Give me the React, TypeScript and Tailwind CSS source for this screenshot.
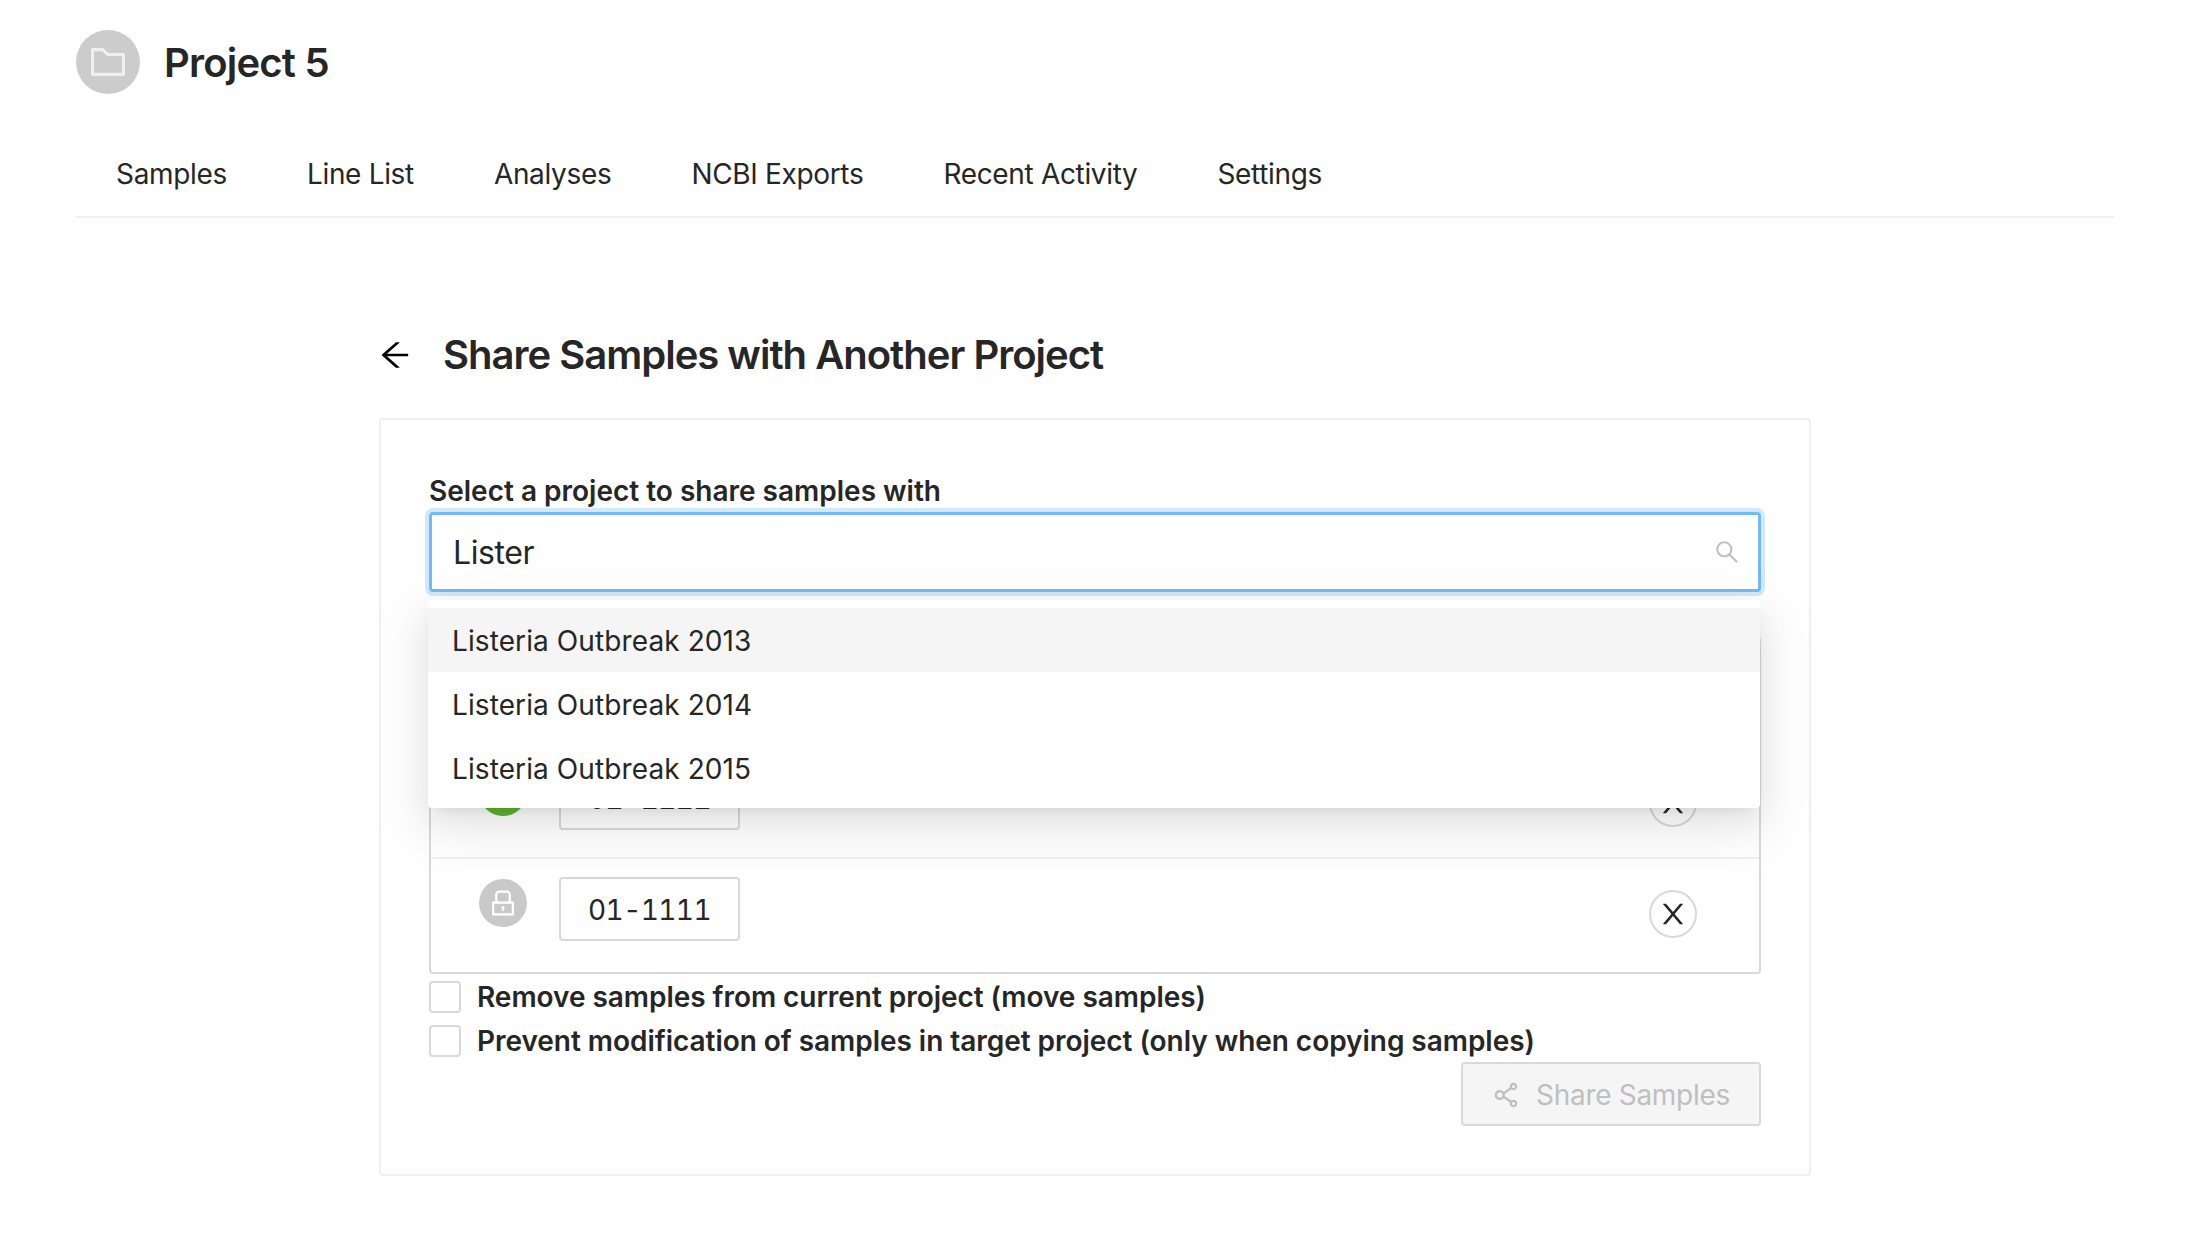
const FOLDER = "M880 298.4H521L403.7 186.2a8.15 8.15 0 00-5.5-2.2H144c-17.7 0-32 14.3-32 32v592c0 17.7 14.3 32 32 32h736c17.7 0 32-14.3 32-32V330.4c0-17.7-14.3-32-32-32zM840 768H184V256h188.5l119.6 114.4H840V768z";
const LOCK = "M832 464h-68V240c0-70.7-57.3-128-128-128H388c-70.7 0-128 57.3-128 128v224h-68c-17.7 0-32 14.3-32 32v384c0 17.7 14.3 32 32 32h640c17.7 0 32-14.3 32-32V496c0-17.7-14.3-32-32-32zM332 240c0-30.9 25.1-56 56-56h248c30.9 0 56 25.1 56 56v224H332V240zm460 600H232V536h560v304zM484 701v53c0 4.4 3.6 8 8 8h40c4.4 0 8-3.6 8-8v-53a48.01 48.01 0 10-56 0z";
const SHARE = "M752 664c-28.5 0-54.8 10-75.4 26.7L469.4 540.8a160.68 160.68 0 000-57.6l207.2-149.9C697.2 350 723.5 360 752 360c66.2 0 120-53.8 120-120s-53.8-120-120-120-120 53.8-120 120c0 11.6 1.6 22.7 4.7 33.3L439.9 415.8C410.7 377.1 364.3 352 312 352c-88.4 0-160 71.6-160 160s71.6 160 160 160c52.3 0 98.7-25.1 127.9-63.8l196.8 142.5c-3.1 10.6-4.7 21.8-4.7 33.3 0 66.2 53.8 120 120 120s120-53.8 120-120-53.8-120-120-120zm0-476c28.7 0 52 23.3 52 52s-23.3 52-52 52-52-23.3-52-52 23.3-52 52-52zM312 600c-48.5 0-88-39.5-88-88s39.5-88 88-88 88 39.5 88 88-39.5 88-88 88zm440 236c-28.7 0-52-23.3-52-52s23.3-52 52-52 52 23.3 52 52-23.3 52-52 52z";
const CLOSE = "M563.8 512l262.5-312.9c4.4-5.2.7-13.1-6.1-13.1h-79.8c-4.7 0-9.2 2.1-12.3 5.7L511.6 449.8 295.1 191.7c-3-3.6-7.5-5.7-12.3-5.7H203c-6.8 0-10.5 7.9-6.1 13.1L459.4 512 196.9 824.9A7.95 7.95 0 00203 838h79.8c4.7 0 9.2-2.1 12.3-5.7l216.5-258.1 216.5 258.1c3 3.6 7.5 5.7 12.3 5.7h79.8c6.8 0 10.5-7.9 6.1-13.1L563.8 512z";
const SEARCH = "M909.6 854.5L649.9 594.8C690.2 542.7 712 479 712 412c0-80.2-31.3-155.4-87.9-212.1-56.6-56.7-132-87.9-212.1-87.9s-155.5 31.3-212.1 87.9C143.2 256.5 112 331.8 112 412c0 80.1 31.3 155.5 87.9 212.1C256.5 680.8 331.8 712 412 712c67 0 130.6-21.8 182.7-62l259.7 259.6a8.2 8.2 0 0011.6 0l43.6-43.5a8.2 8.2 0 000-11.6zM570.4 570.4C528 612.7 471.8 636 412 636s-116-23.3-158.4-65.6C211.3 528 188 471.8 188 412s23.3-116.1 65.6-158.4C296 211.3 352.2 188 412 188s116.1 23.2 158.4 65.6S636 352.2 636 412s-23.3 116.1-65.6 158.4z";
const ARROW = "M872 474H286.9l350.2-304c5.6-4.9 2.2-14-5.2-14h-88.5c-3.9 0-7.6 1.4-10.5 3.9L155 487.8a31.96 31.96 0 000 48.3L535.1 866c1.5 1.3 3.3 2 5.2 2h91.5c7.4 0 10.8-9.2 5.2-14L286.9 550H872c4.4 0 8-3.6 8-8v-60c0-4.4-3.6-8-8-8z";

const Icon = ({ d, className }: { d: string; className: string }) => (
  <svg viewBox="64 64 896 896" fill="currentColor" className={className}>
    <path d={d} />
  </svg>
);

const tabs = ["Samples", "Line List", "Analyses", "NCBI Exports", "Recent Activity", "Settings"];
const projects = ["Listeria Outbreak 2013", "Listeria Outbreak 2014", "Listeria Outbreak 2015"];

const SampleRow = ({ name, locked, last }: { name: string; locked: boolean; last?: boolean }) => (
  <div className={`flex items-start pl-[48px] pr-[62px] pt-[18px] h-[111px] ${last ? "" : "border-b-2 border-[#f0f0f0]"}`}>
    <div className={`flex items-center justify-center w-[48px] h-[48px] rounded-full mt-[2px] text-white ${locked ? "bg-[#c9c9c9]" : "bg-[#5cb531]"}`}>
      <Icon d={LOCK} className="w-[28px] h-[28px]" />
    </div>
    <div className="flex items-center justify-center w-[181px] h-[64px] ml-[32px] pt-[2px] border-2 border-[#d9d9d9] rounded-[4px] text-[28px] tabular-nums tracking-[-0.6px]">
      {name}
    </div>
    <div className="flex items-center justify-center w-[48px] h-[48px] ml-auto mt-[13px] rounded-full border-2 border-[#d9d9d9]">
      <Icon d={CLOSE} className="w-[28px] h-[28px]" />
    </div>
  </div>
);

const CheckRow = ({ label }: { label: string }) => (
  <label className="flex items-center h-[44px] text-[28px] font-semibold tracking-[-0.04px]">
    <span className="w-[32px] h-[32px] mr-[16px] border-2 border-[#d9d9d9] rounded-[4px]" />
    {label}
  </label>
);

export default function App() {
  return (
    <div className="min-h-screen bg-white text-[#262626] font-['Inter',sans-serif] overflow-hidden">
      <header className="ml-[76px] mr-[78px] pt-[30px] border-b-2 border-[#f0f0f0]">
        <div className="flex items-center h-[64px]">
          <div className="flex items-center justify-center w-[64px] h-[64px] rounded-full bg-[#cccccc] text-[#f0f0f0]">
            <Icon d={FOLDER} className="w-[38px] h-[38px]" />
          </div>
          <h1 className="ml-[24px] mt-[2px] text-[40px] leading-none font-semibold tracking-[-0.8px]">Project 5</h1>
        </div>
        <nav className="flex mt-[36px] h-[86px] items-center">
          {tabs.map((tab) => (
            <div key={tab} className="px-[40px] pt-[1px] text-[28px] tracking-[-0.33px]">{tab}</div>
          ))}
        </nav>
      </header>

      <main className="ml-[379px] w-[1432px]">
        <div className="flex items-center mt-[107px] h-[60px]">
          <Icon d={ARROW} className="w-[32px] h-[32px] text-black" />
          <h2 className="ml-[32px] text-[40px] font-semibold tracking-[-1px]">Share Samples with Another Project</h2>
        </div>
        <section className="relative mt-[33px] h-[758px] border-2 border-[#f0f0f0] rounded-[4px] px-[48px] pt-[48px]">
          <div className="h-[44px] pt-[1px] text-[28px] leading-[44px] font-semibold">Select a project to share samples with</div>
          <div className="flex items-center w-[1332px] h-[80px] pl-[21px] pr-[19px] border-[3px] border-[#74b9f7] rounded-[4px] shadow-[0_0_0_4px_rgba(24,144,255,0.2)] text-[32px] tracking-[-0.4px]">
            <span className="pt-[2px]">Lister</span>
            <Icon d={SEARCH} className="w-[24px] h-[24px] ml-auto text-[#bfbfbf]" />
          </div>

          <div className="absolute left-[47px] top-[180px] z-10 w-[1332px] py-[8px] bg-white rounded-[4px] shadow-[0_6px_12px_-8px_rgba(0,0,0,0.12),0_12px_32px_0_rgba(0,0,0,0.08),0_18px_56px_16px_rgba(0,0,0,0.05)]">
            {projects.map((project, i) => (
              <div key={project} className={`flex items-center h-[64px] px-[24px] pt-[2px] text-[28px] tracking-[0.1px] ${i === 0 ? "bg-[#f5f5f5]" : ""}`}>
                {project}
              </div>
            ))}
          </div>

          <div className="mt-[45px] w-[1332px] h-[337px] border-2 border-[#d9d9d9] rounded-[4px] pt-[109px]">
            <SampleRow name="02-2222" locked={false} />
            <SampleRow name="01-1111" locked last />
          </div>
          <div className="mt-[1px]">
            <CheckRow label="Remove samples from current project (move samples)" />
            <CheckRow label="Prevent modification of samples in target project (only when copying samples)" />
          </div>
          <div className="flex justify-end w-[1332px] -mt-[1px]">
            <div className="flex items-center justify-center w-[300px] h-[64px] pt-[2px] bg-[#f5f5f5] border-2 border-[#d9d9d9] rounded-[4px] text-[28px] tracking-[-0.3px] text-[#bfbfbf]">
              <Icon d={SHARE} className="w-[28px] h-[28px] mr-[16px]" />
              Share Samples
            </div>
          </div>
        </section>
      </main>
    </div>
  );
}
